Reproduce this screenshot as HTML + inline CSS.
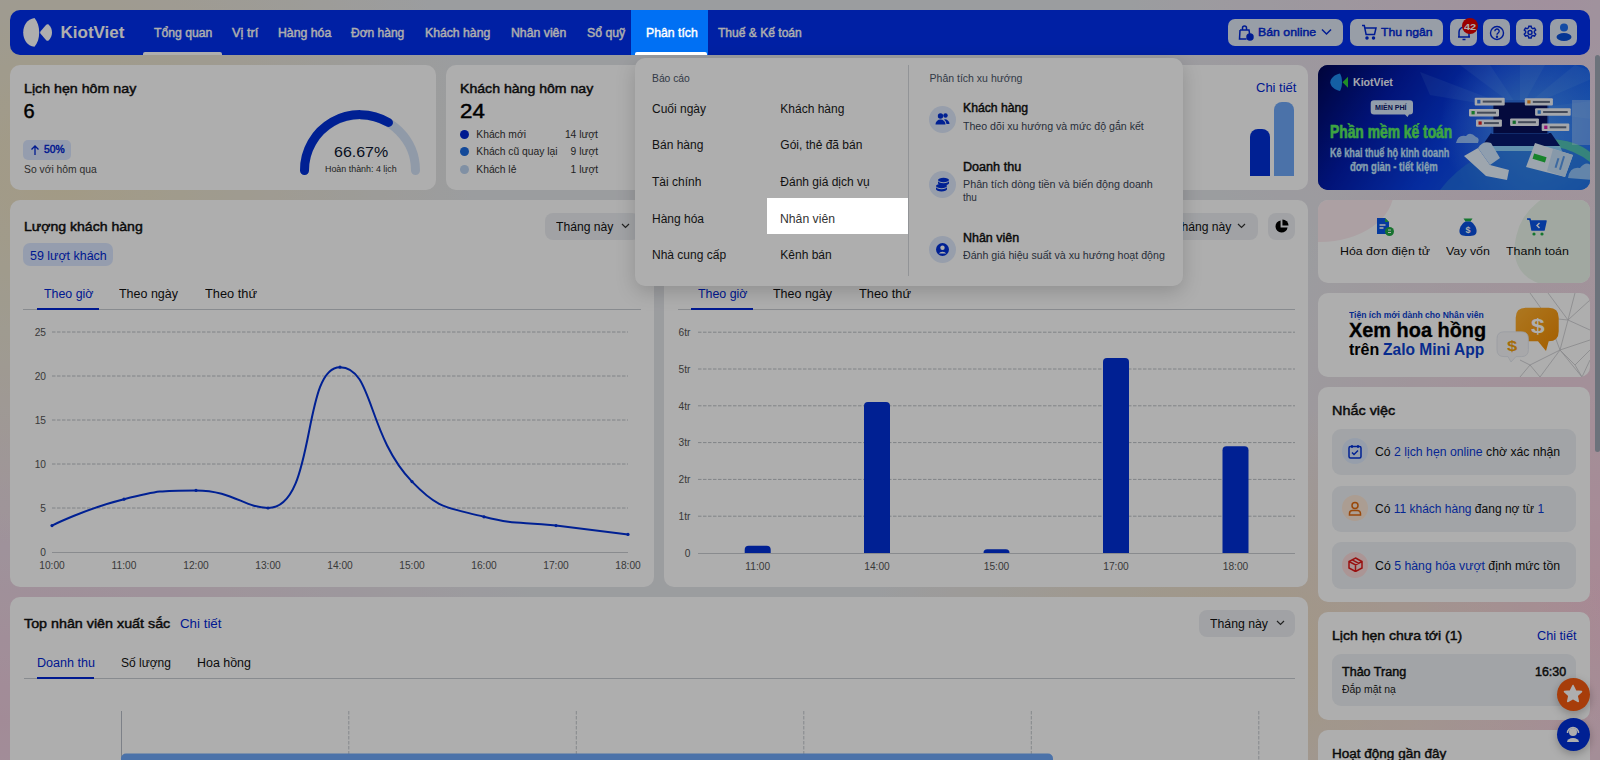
<!DOCTYPE html><html><head><meta charset="utf-8"><style>
*{box-sizing:border-box}
html,body{margin:0;padding:0;width:1600px;height:760px;overflow:hidden;font-family:"Liberation Sans",sans-serif}
body{position:relative}
.t{position:absolute;white-space:pre;line-height:1;transform-origin:0 0}
#bg{position:absolute;left:0;top:0;width:1600px;height:760px;
 background:
  radial-gradient(ellipse 420px 380px at 60px 170px, rgba(238,226,194,1) 0%, rgba(238,226,194,0) 100%),
  radial-gradient(ellipse 560px 420px at 0px 720px, rgba(238,204,222,1) 0%, rgba(238,204,222,0) 100%),
  radial-gradient(ellipse 380px 260px at 1240px 660px, rgba(238,220,192,1) 0%, rgba(238,220,192,0) 100%),
  radial-gradient(ellipse 380px 560px at 1600px 600px, rgba(246,200,218,1) 0%, rgba(246,200,218,0) 100%),
  radial-gradient(ellipse 420px 320px at 1550px 0px, rgba(236,212,230,1) 0%, rgba(236,212,230,0) 100%),
  #e4e6ea}
.nav{position:absolute;left:10px;top:10px;width:1580px;height:45px;border-radius:10px;background:#0030f0}
.nbtn{position:absolute;top:19px;height:26.6px;border-radius:7px;background:#dfe8f5}
.card{position:absolute;background:#fff;border-radius:10px}
.sel{position:absolute;height:26.5px;border-radius:8px;background:#eceef2}
.dd{position:absolute;left:635px;top:58px;width:548px;height:228px;border-radius:10px;background:#fff;box-shadow:0 6px 20px rgba(0,0,0,.18)}
.fab{position:absolute;width:33px;height:33px;border-radius:50%;box-shadow:0 3px 8px rgba(0,0,0,.25)}
#banner{position:absolute;left:1318px;top:65px;width:272px;height:125px;border-radius:10px;overflow:hidden;
 background:linear-gradient(100deg,#00106a 0%,#0a2fb0 45%,#1f66e8 75%,#3a8cf0 100%)}
#ov{position:absolute;left:0;top:0;width:1600px;height:760px;background:rgba(0,0,0,.318)}
</style></head><body><div id="bg"></div><div class="nav"></div><svg style="position:absolute;left:20px;top:15px" width="36" height="34" viewBox="20 15 36 34">
<path d="M34.5,18 C27,19.2 23.2,25.5 23.2,32.4 C23.2,39.5 27,45.6 34.5,46.8 C37.6,43 39.2,38 39.2,32.4 C39.2,26.8 37.6,21.8 34.5,18 Z" fill="#fff"/>
<path d="M40.6,31.2 L46.2,24.8 C47,24 47.8,23.9 48.6,24.6 C50.8,26.6 52,29.4 52,32.5 C52,35.6 50.8,38.4 48.6,40.4 C47.8,41.1 47,41 46.2,40.2 L40.6,33.8 C40,33 40,32 40.6,31.2 Z" fill="#fff"/>
</svg><span class="t" style="left:60.50px;top:24.31px;font-size:17px;color:#fff;font-weight:700;">KiotViet</span><span class="t" style="left:154.00px;top:26.26px;font-size:13.4px;color:#fff;-webkit-text-stroke:0.45px #fff;transform:scaleX(0.9101);">Tổng quan</span><span class="t" style="left:232.00px;top:26.26px;font-size:13.4px;color:#fff;-webkit-text-stroke:0.45px #fff;transform:scaleX(0.9543);">Vị trí</span><span class="t" style="left:278.00px;top:26.26px;font-size:13.4px;color:#fff;-webkit-text-stroke:0.45px #fff;transform:scaleX(0.9172);">Hàng hóa</span><span class="t" style="left:351.00px;top:26.26px;font-size:13.4px;color:#fff;-webkit-text-stroke:0.45px #fff;transform:scaleX(0.8965);">Đơn hàng</span><span class="t" style="left:425.00px;top:26.26px;font-size:13.4px;color:#fff;-webkit-text-stroke:0.45px #fff;transform:scaleX(0.9131);">Khách hàng</span><span class="t" style="left:511.00px;top:26.26px;font-size:13.4px;color:#fff;-webkit-text-stroke:0.45px #fff;transform:scaleX(0.9164);">Nhân viên</span><span class="t" style="left:587.00px;top:26.26px;font-size:13.4px;color:#fff;-webkit-text-stroke:0.45px #fff;transform:scaleX(0.9177);">Sổ quỹ</span><span class="t" style="left:717.50px;top:26.26px;font-size:13.4px;color:#fff;-webkit-text-stroke:0.45px #fff;transform:scaleX(0.9002);">Thuế &amp; Kế toán</span><div style="position:absolute;left:143px;top:52px;width:79px;height:3px;background:#fff;border-radius:2px 2px 0 0"></div><div class="nbtn" style="left:1228px;width:115px"></div><svg style="position:absolute;left:1238px;top:24px" width="16" height="17" viewBox="0 0 16 17" fill="none" stroke="#0028d8" stroke-width="1.5">
<path d="M2,6 h9 l0.6,4 M2,6 l-0.5,9 h7"/><path d="M4.5,6 v-2 a2,2 0 0 1 4,0 v2"/><circle cx="12" cy="13" r="3" fill="#0028d8"/></svg><span class="t" style="left:1258.00px;top:26.83px;font-size:11.3px;color:#0028d8;-webkit-text-stroke:0.45px #0028d8;transform:scaleX(1.0883);">Bán online</span><svg style="position:absolute;left:1321px;top:28px" width="11" height="8" viewBox="0 0 11 8"><path d="M1,1.5 L5.5,6 L10,1.5" fill="none" stroke="#0028d8" stroke-width="1.5"/></svg><div class="nbtn" style="left:1350px;width:93px"></div><svg style="position:absolute;left:1361px;top:24px" width="16" height="16" viewBox="0 0 16 16" fill="none" stroke="#0028d8" stroke-width="1.5">
<path d="M1,1.5 h2.3 l1.8,9 h8.4 l1.5,-6.5 h-11.3"/><circle cx="6" cy="14" r="1" fill="#0028d8"/><circle cx="12.5" cy="14" r="1" fill="#0028d8"/></svg><span class="t" style="left:1380.50px;top:26.83px;font-size:11.3px;color:#0028d8;-webkit-text-stroke:0.45px #0028d8;transform:scaleX(1.0807);">Thu ngân</span><div class="nbtn" style="left:1450px;width:27px"></div><div class="nbtn" style="left:1483px;width:27px"></div><div class="nbtn" style="left:1516px;width:27px"></div><div class="nbtn" style="left:1550px;width:27px"></div><svg style="position:absolute;left:1456px;top:25px" width="16" height="16" viewBox="0 0 16 16" fill="none" stroke="#0028d8" stroke-width="1.5">
<path d="M3,12 V7 a5,5 0 0 1 10,0 V12 Z M2,12 h12"/><path d="M6.5,14.5 h3"/></svg><div style="position:absolute;left:1462px;top:18px;width:16px;height:16px;border-radius:8px;background:#e00000"></div><span class="t" style="left:1464.00px;top:21.96px;font-size:9.5px;color:#fff;font-weight:700;transform:scaleX(1.1590);">42</span><svg style="position:absolute;left:1489px;top:25px" width="16" height="16" viewBox="0 0 16 16" fill="none" stroke="#0028d8" stroke-width="1.4">
<circle cx="8" cy="8" r="6.5"/><path d="M5.8,6.2 a2.2,2.2 0 1 1 3.2,2 c-0.8,0.4 -1,0.8 -1,1.6"/><circle cx="8" cy="11.8" r="0.5" fill="#0028d8"/></svg><svg style="position:absolute;left:1522px;top:24px" width="16" height="17" viewBox="0 0 24 24" fill="none" stroke="#0028d8" stroke-width="2.2">
<path d="M10.3,2.5 h3.4 l0.6,2.6 a7.5,7.5 0 0 1 2,1.15 l2.55,-0.8 l1.7,2.95 l-2,1.8 a7.5,7.5 0 0 1 0,2.3 l2,1.8 l-1.7,2.95 l-2.55,-0.8 a7.5,7.5 0 0 1 -2,1.15 l-0.6,2.6 h-3.4 l-0.6,-2.6 a7.5,7.5 0 0 1 -2,-1.15 l-2.55,0.8 l-1.7,-2.95 l2,-1.8 a7.5,7.5 0 0 1 0,-2.3 l-2,-1.8 l1.7,-2.95 l2.55,0.8 a7.5,7.5 0 0 1 2,-1.15 Z"/><circle cx="12" cy="12" r="3"/></svg><svg style="position:absolute;left:1555px;top:22px" width="18" height="20" viewBox="0 0 18 20">
<circle cx="9" cy="5.5" r="4" fill="#1e6ef0"/><ellipse cx="9" cy="15" rx="7.5" ry="4" fill="#0a4fd8"/></svg><div class="card" style="left:10px;top:65px;width:426px;height:125px"></div><span class="t" style="left:23.50px;top:82.00px;font-size:13px;color:#111;-webkit-text-stroke:0.45px #111;transform:scaleX(1.0937);">Lịch hẹn hôm nay</span><span class="t" style="left:23.50px;top:101.07px;font-size:20px;color:#000;-webkit-text-stroke:0.45px #000;">6</span><div style="position:absolute;left:23px;top:140px;width:48px;height:20px;border-radius:5px;background:#dbe7ff"></div><svg style="position:absolute;left:30px;top:144px" width="10" height="12" viewBox="0 0 10 12"><path d="M5,11 V2 M1.5,5.5 L5,2 L8.5,5.5" fill="none" stroke="#0026d4" stroke-width="1.3"/></svg><span class="t" style="left:43.50px;top:144.11px;font-size:10.5px;color:#0026d4;-webkit-text-stroke:0.45px #0026d4;transform:scaleX(0.9774);">50%</span><span class="t" style="left:23.50px;top:164.11px;font-size:10.5px;color:#444;transform:scaleX(0.9841);">So với hôm qua</span><svg style="position:absolute;left:290px;top:100.5px" width="140" height="85" viewBox="290 100 140 85">
<path d="M304.5,169.5 A55.5,55.5 0 0 1 415.5,169.5" fill="none" stroke="#d4e2f7" stroke-width="9" stroke-linecap="round"/>
<path d="M304.5,169.5 A55.5,55.5 0 0 1 388.5,121.5" fill="none" stroke="#0030d8" stroke-width="9" stroke-linecap="round"/>
</svg><span class="t" style="left:333.50px;top:144.73px;font-size:14.5px;color:#0b1530;transform:scaleX(1.1011);">66.67%</span><span class="t" style="left:324.50px;top:165.18px;font-size:9px;color:#333;transform:scaleX(0.9884);">Hoàn thành: 4 lịch</span><div class="card" style="left:446px;top:65px;width:426px;height:125px"></div><span class="t" style="left:460.00px;top:82.00px;font-size:13px;color:#111;-webkit-text-stroke:0.45px #111;transform:scaleX(1.0844);">Khách hàng hôm nay</span><span class="t" style="left:460.00px;top:101.07px;font-size:20px;color:#000;-webkit-text-stroke:0.45px #000;transform:scaleX(1.1146);">24</span><div style="position:absolute;left:460px;top:129.5px;width:9px;height:9px;border-radius:5px;background:#0026d4"></div><span class="t" style="left:476.30px;top:129.58px;font-size:10.3px;color:#333;">Khách mới</span><span class="t" style="left:564.89px;top:129.58px;font-size:10.3px;color:#333;">14 lượt</span><div style="position:absolute;left:460px;top:147.0px;width:9px;height:9px;border-radius:5px;background:#1c6be0"></div><span class="t" style="left:476.30px;top:147.08px;font-size:10.3px;color:#333;">Khách cũ quay lại</span><span class="t" style="left:570.61px;top:147.08px;font-size:10.3px;color:#333;">9 lượt</span><div style="position:absolute;left:460px;top:164.5px;width:9px;height:9px;border-radius:5px;background:#bcd3f0"></div><span class="t" style="left:476.30px;top:164.58px;font-size:10.3px;color:#333;">Khách lẻ</span><span class="t" style="left:570.61px;top:164.58px;font-size:10.3px;color:#333;">1 lượt</span><div class="card" style="left:882px;top:65px;width:426px;height:125px"></div><span class="t" style="left:1255.50px;top:81.84px;font-size:12px;color:#0026d4;transform:scaleX(1.0830);">Chi tiết</span><div style="position:absolute;left:1250px;top:129px;width:20px;height:47px;border-radius:8px 8px 0 0;background:#0030d8"></div><div style="position:absolute;left:1273.5px;top:102px;width:20px;height:74px;border-radius:8px 8px 0 0;background:#6fa8f8"></div><div id="banner"><svg width="272" height="125" viewBox="1318 65 272 125" style="position:absolute;left:0;top:0">
<defs>
<linearGradient id="bgG" x1="0" y1="0" x2="1" y2="0.3">
<stop offset="0" stop-color="#000656"/><stop offset="0.3" stop-color="#021cb0"/><stop offset="0.6" stop-color="#0840e8"/><stop offset="1" stop-color="#1c6cf6"/></linearGradient>
<radialGradient id="glow" cx="1525" cy="125" r="85" gradientUnits="userSpaceOnUse"><stop offset="0" stop-color="#7fd8ff" stop-opacity=".5"/><stop offset="1" stop-color="#8fd0ff" stop-opacity="0"/></radialGradient>
<linearGradient id="grT" x1="0" y1="0" x2="0" y2="1"><stop offset="0" stop-color="#7dff6a"/><stop offset="1" stop-color="#3fd84a"/></linearGradient>
</defs>
<rect x="1318" y="65" width="272" height="125" fill="url(#bgG)"/>
<g fill="#8fd0ff" opacity=".10"><path d="M1520,110 L1460,65 L1490,65 Z"/><path d="M1520,110 L1520,65 L1545,65 Z"/><path d="M1520,110 L1575,65 L1600,75 Z"/><path d="M1520,110 L1600,100 L1600,120 Z"/><path d="M1520,110 L1420,72 L1430,95 Z"/></g>
<rect x="1318" y="65" width="272" height="125" fill="url(#glow)"/>
<path d="M1440,190 Q1470,150 1530,140 Q1570,136 1590,150 L1590,190 Z" fill="#2a7fe0" opacity=".55"/>
<path d="M1550,139 Q1575,140 1590,152 L1590,162 Q1575,150 1552,146 Z" fill="#5fe0a0" opacity=".7"/>
<rect x="1572" y="100" width="18" height="45" fill="#d6ecff" opacity=".35"/>
<path d="M1491,133 L1551,133 L1560,146 L1482,146 Z" fill="#061a70"/>
<path d="M1482,146 L1560,146 L1562,151 L1480,151 Z" fill="#9fe0ff" opacity=".85"/>
<rect x="1491" y="100" width="58" height="34" rx="1.5" fill="#2f6fe0"/>
<rect x="1493.4" y="102.5" width="54" height="31" fill="#06105a"/>
<path d="M1456,143 Q1458,134 1466,136 Q1470,131 1476,137 Q1480,138 1478,143 Z" fill="#bfe2ff" opacity=".75"/>
<path d="M1568,178 Q1570,166 1580,168 Q1586,160 1592,166 L1592,180 Z" fill="#bfe2ff" opacity=".7"/>
<path d="M1464,156 L1478,148 L1490,165 L1509,170 L1507,180 L1486,176 Z" fill="#e8f4ff"/>
<path d="M1478,148 Q1483,140 1491,143 L1500,158 L1490,165 Z" fill="#d2e8ff"/>
<path d="M1535,143 L1573,155 L1565,177 L1526,167 Z" fill="#e6f2ff"/>
<path d="M1553,149 L1573,155 L1565,177 L1547,171 Z" fill="#c6e0fa"/>
<rect x="1533" y="155" width="13" height="5.5" fill="#22c040" transform="rotate(17 1539 158)"/>
<g fill="#3f8ae8" opacity=".8"><rect x="1556" y="158" width="2" height="10" transform="rotate(17 1557 163)"/><rect x="1561" y="156" width="2" height="14" transform="rotate(17 1562 163)"/></g>
<g><rect x="1474.7" y="97.8" width="30" height="7.7" rx="1" fill="#f2f5fb"/><rect x="1477.2" y="99.8" width="3.2" height="3.7" fill="#3a7ae8"/><rect x="1482.7" y="100.6" width="19.0" height="2" fill="#2a3450" opacity=".7"/><rect x="1524.8" y="98.3" width="28.1" height="7.2" rx="1" fill="#f2f5fb"/><rect x="1527.3" y="100.3" width="3.2" height="3.2" fill="#f08a20"/><rect x="1532.8" y="100.9" width="17.1" height="2" fill="#2a3450" opacity=".7"/><rect x="1469" y="109" width="30" height="7.4" rx="1" fill="#f2f5fb"/><rect x="1471.5" y="111.0" width="3.2" height="3.4" fill="#22b040"/><rect x="1477.0" y="111.7" width="19.0" height="2" fill="#2a3450" opacity=".7"/><rect x="1535.1" y="108.3" width="35.6" height="7.5" rx="1" fill="#f2f5fb"/><rect x="1537.6" y="110.3" width="3.2" height="3.5" fill="#3a8ae8"/><rect x="1543.1" y="111.0" width="24.6" height="2" fill="#2a3450" opacity=".7"/><rect x="1476" y="119.4" width="25.9" height="7.3" rx="1" fill="#f2f5fb"/><rect x="1478.5" y="121.4" width="3.2" height="3.3" fill="#e02020"/><rect x="1484.0" y="122.1" width="14.9" height="2" fill="#2a3450" opacity=".7"/><rect x="1510.1" y="118.6" width="28.8" height="7.3" rx="1" fill="#f2f5fb"/><rect x="1512.6" y="120.6" width="3.2" height="3.3" fill="#20a040"/><rect x="1518.1" y="121.2" width="17.8" height="2" fill="#2a3450" opacity=".7"/><rect x="1541.7" y="123.6" width="27.6" height="7.4" rx="1" fill="#f2f5fb"/><rect x="1544.2" y="125.6" width="3.2" height="3.4" fill="#e020b0"/><rect x="1549.7" y="126.3" width="16.6" height="2" fill="#2a3450" opacity=".7"/></g>
<path d="M1340,73.5 C1335,74.5 1330.3,78 1330.3,82.3 C1330.3,86.6 1335,90 1340,91 C1341.5,88.5 1342,85.5 1342,82.3 C1342,79 1341.5,76 1340,73.5 Z" fill="#1e8cf0"/>
<path d="M1342.5,82.3 L1348,76.8 L1348,87.8 Z" fill="#2fd03a"/>
<path d="M1374,100.2 H1409.8 Q1413,100.2 1413,103.4 V111.2 Q1413,114.4 1409.8,114.4 H1409 L1407.5,117 L1405,114.4 H1374 Q1370.7,114.4 1370.7,111.2 V103.4 Q1370.7,100.2 1374,100.2 Z" fill="#d6e6fb"/>
</svg></div><span class="t" style="left:1353.00px;top:77.41px;font-size:10.5px;color:#f2f6ff;font-weight:700;transform:scaleX(1.0090);">KiotViet</span><span class="t" style="left:1375.00px;top:104.15px;font-size:7.5px;color:#0a1a6a;font-weight:700;transform:scaleX(0.9477);">MIỄN PHÍ</span><span class="t" style="left:1330.30px;top:122.42px;font-size:19px;color:#5cf060;font-weight:700;transform:scaleX(0.7280);-webkit-text-stroke:0.7px #5cf060;">Phần mềm kế toán</span><span class="t" style="left:1329.60px;top:147.34px;font-size:12px;color:#c4e6ff;font-weight:700;transform:scaleX(0.7618);-webkit-text-stroke:0.3px #c4e6ff;">Kê khai thuế hộ kinh doanh</span><span class="t" style="left:1349.50px;top:161.04px;font-size:12px;color:#c4e6ff;font-weight:700;transform:scaleX(0.7939);-webkit-text-stroke:0.3px #c4e6ff;">đơn giản - tiết kiệm</span><div class="card" style="left:10px;top:200px;width:644px;height:386.5px"></div><span class="t" style="left:23.60px;top:220.40px;font-size:13px;color:#111;-webkit-text-stroke:0.45px #111;transform:scaleX(1.0818);">Lượng khách hàng</span><div class="sel" style="left:545px;top:213px;width:95px"></div><span class="t" style="left:556.40px;top:221.44px;font-size:12px;color:#111;transform:scaleX(1.0131);">Tháng này</span><svg style="position:absolute;left:621px;top:223px" width="9" height="6" viewBox="0 0 9 6"><path d="M1,1 L4.5,4.5 L8,1" fill="none" stroke="#333" stroke-width="1.2"/></svg><div style="position:absolute;left:23px;top:243px;width:90px;height:23px;border-radius:7px;background:#dbe7ff"></div><span class="t" style="left:30.40px;top:249.64px;font-size:12px;color:#0026d4;transform:scaleX(1.0380);">59 lượt khách</span><span class="t" style="left:44.00px;top:287.54px;font-size:12px;color:#0026d4;transform:scaleX(1.0324);">Theo giờ</span><span class="t" style="left:119.00px;top:287.54px;font-size:12px;color:#111;transform:scaleX(1.0395);">Theo ngày</span><span class="t" style="left:204.60px;top:287.54px;font-size:12px;color:#111;transform:scaleX(1.0662);">Theo thứ</span><div style="position:absolute;left:23px;top:309px;width:618px;height:1px;background:#c8ccd2"></div><div style="position:absolute;left:37px;top:307.5px;width:62px;height:2.5px;background:#0026d4"></div><svg style="position:absolute;left:0;top:0" width="660" height="600" viewBox="0 0 660 600"><path d="M52,552.5 H628" stroke="#c9ccd1" stroke-width="1"/><path d="M52,508 H628" stroke="#bcc0c6" stroke-width="1" stroke-dasharray="3.5 1.5"/><path d="M52,464 H628" stroke="#bcc0c6" stroke-width="1" stroke-dasharray="3.5 1.5"/><path d="M52,420 H628" stroke="#bcc0c6" stroke-width="1" stroke-dasharray="3.5 1.5"/><path d="M52,376 H628" stroke="#bcc0c6" stroke-width="1" stroke-dasharray="3.5 1.5"/><path d="M52,332 H628" stroke="#bcc0c6" stroke-width="1" stroke-dasharray="3.5 1.5"/><path d="M52.00,525.60 C52.00,525.60 87.00,508.24 124.00,499.20 C159.00,490.64 160.39,490.40 196.00,490.40 C232.39,490.40 245.02,508.00 268.00,508.00 C317.02,508.00 301.18,367.20 340.00,367.20 C373.18,367.20 366.80,434.64 412.00,481.60 C438.80,509.44 446.21,507.08 484.00,516.80 C518.21,525.60 520.00,521.20 556.00,525.60 C592.00,530.00 628.00,534.40 628.00,534.40" fill="none" stroke="#0030d8" stroke-width="2"/><circle cx="52" cy="525.6" r="1.6" fill="#0030d8"/><circle cx="124" cy="499.2" r="1.6" fill="#0030d8"/><circle cx="196" cy="490.4" r="1.6" fill="#0030d8"/><circle cx="268" cy="508.0" r="1.6" fill="#0030d8"/><circle cx="340" cy="367.2" r="1.6" fill="#0030d8"/><circle cx="412" cy="481.6" r="1.6" fill="#0030d8"/><circle cx="484" cy="516.8" r="1.6" fill="#0030d8"/><circle cx="556" cy="525.6" r="1.6" fill="#0030d8"/><circle cx="628" cy="534.4" r="1.6" fill="#0030d8"/></svg><span class="t" style="left:40.33px;top:547.87px;font-size:10.2px;color:#555;">0</span><span class="t" style="left:40.33px;top:503.87px;font-size:10.2px;color:#555;">5</span><span class="t" style="left:34.66px;top:459.87px;font-size:10.2px;color:#555;">10</span><span class="t" style="left:34.66px;top:415.87px;font-size:10.2px;color:#555;">15</span><span class="t" style="left:34.66px;top:371.87px;font-size:10.2px;color:#555;">20</span><span class="t" style="left:34.66px;top:327.87px;font-size:10.2px;color:#555;">25</span><span class="t" style="left:39.25px;top:561.17px;font-size:10.2px;color:#555;">10:00</span><span class="t" style="left:111.62px;top:561.17px;font-size:10.2px;color:#555;">11:00</span><span class="t" style="left:183.25px;top:561.17px;font-size:10.2px;color:#555;">12:00</span><span class="t" style="left:255.25px;top:561.17px;font-size:10.2px;color:#555;">13:00</span><span class="t" style="left:327.25px;top:561.17px;font-size:10.2px;color:#555;">14:00</span><span class="t" style="left:399.25px;top:561.17px;font-size:10.2px;color:#555;">15:00</span><span class="t" style="left:471.25px;top:561.17px;font-size:10.2px;color:#555;">16:00</span><span class="t" style="left:543.25px;top:561.17px;font-size:10.2px;color:#555;">17:00</span><span class="t" style="left:615.25px;top:561.17px;font-size:10.2px;color:#555;">18:00</span><div class="card" style="left:664px;top:200px;width:644px;height:386.5px"></div><div class="sel" style="left:1160px;top:213px;width:98px"></div><span class="t" style="left:1174.00px;top:221.44px;font-size:12px;color:#111;transform:scaleX(1.0131);">Tháng này</span><svg style="position:absolute;left:1237px;top:223px" width="9" height="6" viewBox="0 0 9 6"><path d="M1,1 L4.5,4.5 L8,1" fill="none" stroke="#333" stroke-width="1.2"/></svg><div class="sel" style="left:1268px;top:213px;width:27px"></div><svg style="position:absolute;left:1274px;top:219px" width="15" height="15" viewBox="0 0 16 16"><path d="M7,1.5 A6.5,6.5 0 1 0 14.5,9 H7 Z" fill="#000"/><path d="M9,0.5 V7 H15.5 A6.5,6.5 0 0 0 9,0.5 Z" fill="#000"/></svg><span class="t" style="left:698.00px;top:287.54px;font-size:12px;color:#0026d4;transform:scaleX(1.0324);">Theo giờ</span><span class="t" style="left:773.00px;top:287.54px;font-size:12px;color:#111;transform:scaleX(1.0395);">Theo ngày</span><span class="t" style="left:858.50px;top:287.54px;font-size:12px;color:#111;transform:scaleX(1.0662);">Theo thứ</span><div style="position:absolute;left:678px;top:309px;width:617px;height:1px;background:#c8ccd2"></div><div style="position:absolute;left:691px;top:307.5px;width:62px;height:2.5px;background:#0026d4"></div><svg style="position:absolute;left:0;top:0" width="1320" height="600" viewBox="0 0 1320 600"><path d="M698,553.5 H1295" stroke="#c9ccd1"/><path d="M698,516.2 H1295" stroke="#bcc0c6" stroke-dasharray="3.5 1.5"/><path d="M698,479.4 H1295" stroke="#bcc0c6" stroke-dasharray="3.5 1.5"/><path d="M698,442.6 H1295" stroke="#bcc0c6" stroke-dasharray="3.5 1.5"/><path d="M698,405.8 H1295" stroke="#bcc0c6" stroke-dasharray="3.5 1.5"/><path d="M698,369.0 H1295" stroke="#bcc0c6" stroke-dasharray="3.5 1.5"/><path d="M698,332.2 H1295" stroke="#bcc0c6" stroke-dasharray="3.5 1.5"/><path d="M744.7,553 V549.64 Q744.7,545.64 748.7,545.64 H766.7 Q770.7,545.64 770.7,549.64 V553 Z" fill="#0030d8"/><path d="M864,553 V406.12 Q864,402.12 868,402.12 H886 Q890,402.12 890,406.12 V553 Z" fill="#0030d8"/><path d="M983.5,553 V553.0 Q983.5,549.32 987.18,549.32 H1005.82 Q1009.5,549.32 1009.5,553.0 V553 Z" fill="#0030d8"/><path d="M1103,553 V361.96000000000004 Q1103,357.96000000000004 1107,357.96000000000004 H1125 Q1129,357.96000000000004 1129,361.96000000000004 V553 Z" fill="#0030d8"/><path d="M1222.5,553 V450.28000000000003 Q1222.5,446.28000000000003 1226.5,446.28000000000003 H1244.5 Q1248.5,446.28000000000003 1248.5,450.28000000000003 V553 Z" fill="#0030d8"/></svg><span class="t" style="left:684.83px;top:548.87px;font-size:10.2px;color:#555;">0</span><span class="t" style="left:678.61px;top:512.07px;font-size:10.2px;color:#555;">1tr</span><span class="t" style="left:678.61px;top:475.27px;font-size:10.2px;color:#555;">2tr</span><span class="t" style="left:678.61px;top:438.47px;font-size:10.2px;color:#555;">3tr</span><span class="t" style="left:678.61px;top:401.67px;font-size:10.2px;color:#555;">4tr</span><span class="t" style="left:678.61px;top:364.87px;font-size:10.2px;color:#555;">5tr</span><span class="t" style="left:678.61px;top:328.07px;font-size:10.2px;color:#555;">6tr</span><span class="t" style="left:745.33px;top:561.87px;font-size:10.2px;color:#555;">11:00</span><span class="t" style="left:864.25px;top:561.87px;font-size:10.2px;color:#555;">14:00</span><span class="t" style="left:983.75px;top:561.87px;font-size:10.2px;color:#555;">15:00</span><span class="t" style="left:1103.25px;top:561.87px;font-size:10.2px;color:#555;">17:00</span><span class="t" style="left:1222.75px;top:561.87px;font-size:10.2px;color:#555;">18:00</span><div class="card" style="left:10px;top:596.5px;width:1298px;height:200px"></div><span class="t" style="left:24.00px;top:617.00px;font-size:13px;color:#111;-webkit-text-stroke:0.45px #111;transform:scaleX(1.0997);">Top nhân viên xuất sắc</span><span class="t" style="left:179.50px;top:617.84px;font-size:12px;color:#0026d4;transform:scaleX(1.1098);">Chi tiết</span><div class="sel" style="left:1199px;top:610px;width:96px"></div><span class="t" style="left:1210.30px;top:617.64px;font-size:12px;color:#111;transform:scaleX(1.0219);">Tháng này</span><svg style="position:absolute;left:1276px;top:620px" width="9" height="6" viewBox="0 0 9 6"><path d="M1,1 L4.5,4.5 L8,1" fill="none" stroke="#333" stroke-width="1.2"/></svg><span class="t" style="left:37.00px;top:657.04px;font-size:12px;color:#0026d4;transform:scaleX(1.0464);">Doanh thu</span><span class="t" style="left:121.00px;top:657.04px;font-size:12px;color:#111;">Số lượng</span><span class="t" style="left:197.00px;top:657.04px;font-size:12px;color:#111;transform:scaleX(1.0368);">Hoa hồng</span><div style="position:absolute;left:24px;top:677.5px;width:1271px;height:1px;background:#c8ccd2"></div><div style="position:absolute;left:37px;top:676.5px;width:57px;height:2.5px;background:#0026d4"></div><svg style="position:absolute;left:0;top:0" width="1320" height="760" viewBox="0 0 1320 760"><path d="M121.5,711 V760" stroke="#b8bec8"/><path d="M348.8,711 V760" stroke="#c4c8ce" stroke-dasharray="3.5 1.5"/><path d="M576.3,711 V760" stroke="#c4c8ce" stroke-dasharray="3.5 1.5"/><path d="M803.8,711 V760" stroke="#c4c8ce" stroke-dasharray="3.5 1.5"/><path d="M1031.3,711 V760" stroke="#c4c8ce" stroke-dasharray="3.5 1.5"/><path d="M1258.8,711 V760" stroke="#c4c8ce" stroke-dasharray="3.5 1.5"/><rect x="121" y="753.6" width="932" height="20" rx="5" fill="#6fa8f8"/></svg><div class="card" style="left:1318px;top:200px;width:272px;height:83px;overflow:hidden"><div style="position:absolute;left:-72px;top:-62px;width:148px;height:104px;border-radius:50%;background:#fcebef"></div><div style="position:absolute;left:198px;top:-10px;width:110px;height:95px;border-radius:45px 0 0 45px;transform:skewX(-12deg);background:#ecf7ec"></div></div><svg style="position:absolute;left:1375px;top:217px" width="20" height="20" viewBox="0 0 20 20">
<path d="M2,1 h8 l4,4 v12 h-12 Z" fill="#0a55e8"/><path d="M10,1 v4 h4 Z" fill="#2bb24c"/><path d="M4.5,8 h6 M4.5,11 h4" stroke="#fff" stroke-width="1.3"/><circle cx="14.5" cy="14.5" r="4.5" fill="#22a845"/><path d="M13,13 h3 M13,15.5 h3" stroke="#fff" stroke-width="1"/></svg><svg style="position:absolute;left:1458px;top:217px" width="20" height="20" viewBox="0 0 20 20">
<path d="M5.5,1.5 h9 l-2,3 h-5 Z" fill="#1fae45"/><path d="M7.5,4.5 h5 C17,7 19,12 18.5,15 C18,18 16,19 10,19 C4,19 2,18 1.5,15 C1,12 3,7 7.5,4.5 Z" fill="#0a4fe0"/><text x="10" y="15.5" font-size="9" font-family="Liberation Sans" font-weight="700" fill="#fff" text-anchor="middle">$</text></svg><svg style="position:absolute;left:1526px;top:217px" width="22" height="20" viewBox="0 0 22 20">
<path d="M1,2 h3 l2,11 h12 l2,-9 h-15" fill="#0a55e8" stroke="#0a55e8" stroke-width="1.5" stroke-linejoin="round"/><path d="M5,4 h15 l-2,9 h-12 Z" fill="#0a55e8"/><circle cx="8" cy="17" r="1.6" fill="#1fae45"/><circle cx="16" cy="17" r="1.6" fill="#1fae45"/><path d="M13.5,6 l-2.5,2.5 l2.5,2.5" stroke="#fff" stroke-width="1.4" fill="none"/></svg><span class="t" style="left:1340.00px;top:246.27px;font-size:11.5px;color:#111;transform:scaleX(1.0749);">Hóa đơn điện tử</span><span class="t" style="left:1446.00px;top:246.27px;font-size:11.5px;color:#111;transform:scaleX(1.0790);">Vay vốn</span><span class="t" style="left:1506.00px;top:246.27px;font-size:11.5px;color:#111;transform:scaleX(1.0813);">Thanh toán</span><div class="card" style="left:1318px;top:293px;width:272px;height:84px;overflow:hidden" id="zalo"></div><svg style="position:absolute;left:1318px;top:293px" width="272" height="84" viewBox="1318 293 272 84">
<defs><clipPath id="zc"><rect x="1318" y="293" width="272" height="84" rx="10"/></clipPath>
<linearGradient id="orG" x1="0" y1="0" x2="1" y2="1"><stop offset="0" stop-color="#ffb030"/><stop offset="1" stop-color="#f08a00"/></linearGradient></defs>
<g clip-path="url(#zc)" stroke="#c8c8cc" stroke-width="0.8" fill="none">
<path d="M1548,293 L1568,320 L1590,300 M1568,320 L1560,350 L1590,340 M1560,350 L1540,377 M1560,350 L1582,377 M1568,320 L1590,330 M1530,365 L1560,350 M1575,293 L1568,320 M1540,377 L1530,365 L1520,377 M1530,293 L1548,318 L1568,320 M1548,318 L1560,350 M1582,377 L1590,360 M1560,350 L1575,365 L1590,350 M1575,365 L1582,377 M1520,360 L1530,365"/>
</g>
<path d="M1525.7,307.7 H1548.7 Q1558.7,307.7 1558.7,317.7 V331.2 Q1558.7,341.2 1548.7,341.2 L1546,351 L1538,341.2 H1525.7 Q1515.7,341.2 1515.7,331.2 V317.7 Q1515.7,307.7 1525.7,307.7 Z" fill="url(#orG)"/>
<path d="M1504,331.8 H1521.4 Q1528.4,331.8 1528.4,338.8 V349.6 Q1528.4,356.6 1521.4,356.6 H1516 L1511,362 L1508,356.6 H1504 Q1497,356.6 1497,349.6 V338.8 Q1497,331.8 1504,331.8 Z" fill="#f7f7f9" stroke="#dfe3ec" stroke-width="0.8"/>
</svg><span class="t" style="left:1531.00px;top:316.07px;font-size:20px;color:#fff;font-weight:700;transform:scaleX(1.2225);">$</span><span class="t" style="left:1506.50px;top:338.30px;font-size:15px;color:#f0a010;font-weight:700;transform:scaleX(1.2225);">$</span><span class="t" style="left:1349.00px;top:310.80px;font-size:8.5px;color:#0b3fd0;font-weight:700;transform:scaleX(1.0095);">Tiện ích mới dành cho Nhân viên</span><span class="t" style="left:1348.50px;top:320.45px;font-size:20.5px;color:#000;font-weight:700;transform:scaleX(0.9710);-webkit-text-stroke:0.3px #000;">Xem hoa hồng</span><span class="t" style="left:1349.00px;top:340.80px;font-size:16.3px;color:#000;font-weight:700;transform:scaleX(0.9850);">trên</span><span class="t" style="left:1383.00px;top:340.80px;font-size:16.3px;color:#0b3fd0;font-weight:700;transform:scaleX(0.9546);">Zalo Mini App</span><div class="card" style="left:1318px;top:387px;width:272px;height:215px"></div><span class="t" style="left:1332.00px;top:403.80px;font-size:13px;color:#111;-webkit-text-stroke:0.45px #111;transform:scaleX(1.1080);">Nhắc việc</span><div style="position:absolute;left:1332px;top:428.59999999999997px;width:244px;height:46.6px;border-radius:9px;background:#eef1f5"></div><div style="position:absolute;left:1342px;top:438.4px;width:26px;height:26px;border-radius:13px;background:#dce8fb"></div><div style="position:absolute;left:1332px;top:485.59999999999997px;width:244px;height:46.6px;border-radius:9px;background:#eef1f5"></div><div style="position:absolute;left:1342px;top:495.4px;width:26px;height:26px;border-radius:13px;background:#fbe6d6"></div><div style="position:absolute;left:1332px;top:542.2px;width:244px;height:46.6px;border-radius:9px;background:#eef1f5"></div><div style="position:absolute;left:1342px;top:552px;width:26px;height:26px;border-radius:13px;background:#fbdada"></div><span class="t" style="left:1375.00px;top:445.54px;font-size:12px;color:#111;transform:scaleX(1.0210);">Có <span style="color:#0a3ad8">2 lịch hẹn online</span> chờ xác nhận</span><span class="t" style="left:1375.00px;top:503.14px;font-size:12px;color:#111;">Có <span style="color:#0a3ad8">11 khách hàng</span> đang nợ từ <span style="color:#0a3ad8">1</span></span><span class="t" style="left:1375.00px;top:559.84px;font-size:12px;color:#111;transform:scaleX(1.0245);">Có <span style="color:#0a3ad8">5 hàng hóa vượt</span> định mức tồn</span><svg style="position:absolute;left:1348px;top:444px" width="14" height="15" viewBox="0 0 14 15" fill="none" stroke="#0030d8" stroke-width="1.5"><rect x="1" y="2.5" width="12" height="11.5" rx="1.5"/><path d="M4,1 v3 M10,1 v3 M4,8.5 l2,2 l4,-4"/></svg><svg style="position:absolute;left:1348px;top:501px" width="14" height="15" viewBox="0 0 14 15" fill="none" stroke="#e06a10" stroke-width="1.5"><circle cx="7" cy="4.5" r="3"/><path d="M1.5,14 v-1.5 a3,3 0 0 1 3,-3 h5 a3,3 0 0 1 3,3 v1.5 Z"/></svg><svg style="position:absolute;left:1348px;top:557px" width="15" height="15" viewBox="0 0 15 15" fill="none" stroke="#e01818" stroke-width="1.5"><path d="M7.5,1 L14,4.5 V11 L7.5,14.5 L1,11 V4.5 Z M1,4.5 L7.5,8 L14,4.5 M7.5,8 V14.5 M4.2,2.8 L10.8,6.3"/></svg><div class="card" style="left:1318px;top:612px;width:272px;height:108px"></div><span class="t" style="left:1332.00px;top:629.00px;font-size:13px;color:#111;-webkit-text-stroke:0.45px #111;transform:scaleX(1.0803);">Lịch hẹn chưa tới (1)</span><span class="t" style="left:1536.74px;top:629.84px;font-size:12px;color:#0026d4;transform:scaleX(1.0562);">Chi tiết</span><div style="position:absolute;left:1332px;top:653.7px;width:244px;height:52.6px;border-radius:9px;background:#eef1f5"></div><span class="t" style="left:1342.00px;top:665.64px;font-size:12px;color:#111;-webkit-text-stroke:0.45px #111;transform:scaleX(1.0454);">Thảo Trang</span><span class="t" style="left:1535.14px;top:665.64px;font-size:12px;color:#111;-webkit-text-stroke:0.45px #111;transform:scaleX(1.0376);">16:30</span><span class="t" style="left:1342.00px;top:685.33px;font-size:10px;color:#222;transform:scaleX(1.0406);">Đắp mặt nạ</span><div class="card" style="left:1318px;top:730px;width:272px;height:100px"></div><span class="t" style="left:1332.00px;top:747.00px;font-size:13px;color:#111;-webkit-text-stroke:0.45px #111;transform:scaleX(1.0397);">Hoạt động gần đây</span><div style="position:absolute;left:1595px;top:55px;width:5px;height:397px;background:#9ea8b4;border-radius:3px"></div><div class="dd"></div><div style="position:absolute;left:908px;top:65px;width:1px;height:211px;background:#d6d9de"></div><span class="t" style="left:652.00px;top:73.11px;font-size:10.5px;color:#4a5568;transform:scaleX(0.9821);">Báo cáo</span><span class="t" style="left:652.00px;top:102.84px;font-size:12px;color:#1a1a1a;">Cuối ngày</span><span class="t" style="left:780.30px;top:102.84px;font-size:12px;color:#1a1a1a;">Khách hàng</span><span class="t" style="left:652.00px;top:139.44px;font-size:12px;color:#1a1a1a;">Bán hàng</span><span class="t" style="left:780.30px;top:139.44px;font-size:12px;color:#1a1a1a;">Gói, thẻ đã bán</span><span class="t" style="left:652.00px;top:176.04px;font-size:12px;color:#1a1a1a;">Tài chính</span><span class="t" style="left:780.30px;top:176.04px;font-size:12px;color:#1a1a1a;">Đánh giá dịch vụ</span><span class="t" style="left:652.00px;top:212.64px;font-size:12px;color:#1a1a1a;">Hàng hóa</span><span class="t" style="left:652.00px;top:249.24px;font-size:12px;color:#1a1a1a;">Nhà cung cấp</span><span class="t" style="left:780.30px;top:249.24px;font-size:12px;color:#1a1a1a;">Kênh bán</span><span class="t" style="left:929.60px;top:73.11px;font-size:10.5px;color:#4a5568;">Phân tích xu hướng</span><div style="position:absolute;left:929px;top:105.5px;width:27px;height:27px;border-radius:14px;background:#dde8fb"></div><div style="position:absolute;left:929px;top:170.5px;width:27px;height:27px;border-radius:14px;background:#dde8fb"></div><div style="position:absolute;left:929px;top:235.5px;width:27px;height:27px;border-radius:14px;background:#dde8fb"></div><span class="t" style="left:963.00px;top:102.04px;font-size:12px;color:#111;-webkit-text-stroke:0.45px #111;transform:scaleX(1.0171);">Khách hàng</span><span class="t" style="left:963.00px;top:121.53px;font-size:10px;color:#3b4656;transform:scaleX(1.0597);">Theo dõi xu hướng và mức độ gắn kết</span><span class="t" style="left:963.00px;top:160.54px;font-size:12px;color:#111;-webkit-text-stroke:0.45px #111;transform:scaleX(1.0500);">Doanh thu</span><span class="t" style="left:963.00px;top:179.53px;font-size:10px;color:#3b4656;transform:scaleX(1.0735);">Phân tích dòng tiền và biến động doanh</span><span class="t" style="left:963.00px;top:192.53px;font-size:10px;color:#3b4656;">thu</span><span class="t" style="left:963.00px;top:231.64px;font-size:12px;color:#111;-webkit-text-stroke:0.45px #111;transform:scaleX(1.0391);">Nhân viên</span><span class="t" style="left:963.00px;top:251.03px;font-size:10px;color:#3b4656;transform:scaleX(1.0618);">Đánh giá hiệu suất và xu hướng hoạt động</span><svg style="position:absolute;left:935px;top:112px" width="15" height="14" viewBox="0 0 15 14" fill="#0030d8"><circle cx="5.5" cy="4" r="2.7"/><circle cx="10.5" cy="3.5" r="2.2"/><path d="M0.5,12.5 a5,5 0 0 1 10,0 Z"/><path d="M9,7.5 a4.5,4.5 0 0 1 5.5,4.5 h-3 a6,6 0 0 0 -2.5,-4.5 Z"/></svg><svg style="position:absolute;left:935px;top:177px" width="15" height="15" viewBox="0 0 15 15" fill="#0030d8"><ellipse cx="8.5" cy="3" rx="5.5" ry="2.2"/><path d="M3,4 v2.3 c0,1.2 2.5,2.2 5.5,2.2 s5.5,-1 5.5,-2.2 v-2.3 c0,1.2 -2.5,2.2 -5.5,2.2 s-5.5,-1 -5.5,-2.2 Z"/><ellipse cx="6.5" cy="9" rx="5.5" ry="2.2"/><path d="M1,10 v2.3 c0,1.2 2.5,2.2 5.5,2.2 s5.5,-1 5.5,-2.2 v-2.3 c0,1.2 -2.5,2.2 -5.5,2.2 s-5.5,-1 -5.5,-2.2 Z"/></svg><svg style="position:absolute;left:935px;top:242px" width="15" height="15" viewBox="0 0 15 15"><circle cx="7.5" cy="7.5" r="6.5" fill="#0030d8"/><circle cx="7.5" cy="5.8" r="2.2" fill="#fff"/><path d="M3.8,11.5 a4,3 0 0 1 7.4,0 Z" fill="#fff"/></svg><div class="fab" style="left:1556.5px;top:677.5px;background:#f55a10"></div><svg style="position:absolute;left:1563px;top:684px" width="20" height="20" viewBox="0 0 20 20"><path d="M10,1.5 L12.6,6.9 L18.5,7.6 L14.1,11.6 L15.3,17.5 L10,14.5 L4.7,17.5 L5.9,11.6 L1.5,7.6 L7.4,6.9 Z" fill="#fff" stroke="#fff" stroke-width="1.5" stroke-linejoin="round"/></svg><div class="fab" style="left:1556.5px;top:717.5px;background:#0030d8"></div><svg style="position:absolute;left:1563px;top:724px" width="20" height="20" viewBox="0 0 20 20"><circle cx="10" cy="8" r="4" fill="#fff"/><path d="M4,18 a6,4 0 0 1 12,0 Z" fill="#fff"/><path d="M4.5,9 a5.5,5.5 0 0 1 11,0" fill="none" stroke="#fff" stroke-width="1.5"/></svg><div id="ov"></div><div style="position:absolute;left:631px;top:10px;width:77px;height:45px;background:#0070f4"></div><span class="t" style="left:645.50px;top:26.26px;font-size:13.4px;color:#fff;-webkit-text-stroke:0.45px #fff;transform:scaleX(0.9151);">Phân tích</span><div style="position:absolute;left:635px;top:52px;width:72px;height:3px;background:#fff;border-radius:2px 2px 0 0"></div><div style="position:absolute;left:767px;top:198px;width:141px;height:36px;background:#fff"></div><span class="t" style="left:780.30px;top:212.54px;font-size:12px;color:#333;transform:scaleX(1.0169);">Nhân viên</span></body></html>
